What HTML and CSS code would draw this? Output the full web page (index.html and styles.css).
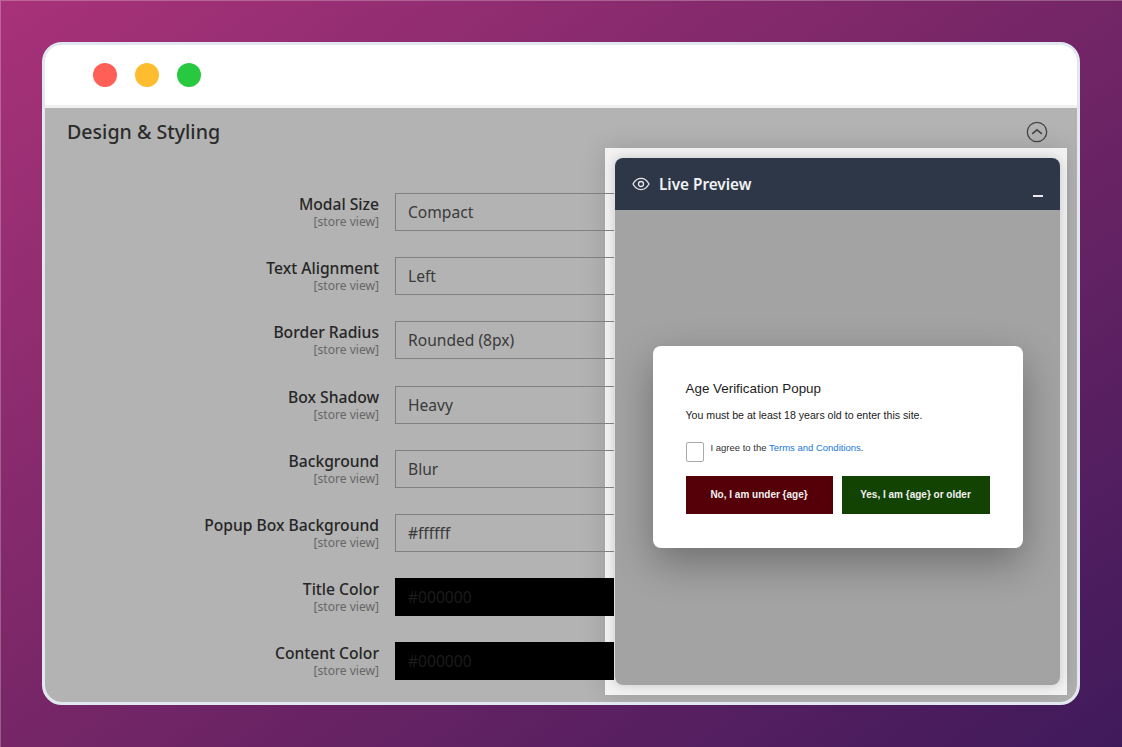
FILE: index.html
```html
<!DOCTYPE html>
<html lang="en">
<head>
<meta charset="utf-8">
<title>Design &amp; Styling</title>
<link rel="stylesheet" href="styles.css">
</head>
<body>
<div class="window">
  <header class="titlebar">
    <span class="dot red"></span>
    <span class="dot yellow"></span>
    <span class="dot green"></span>
  </header>
  <main class="content">
    <div class="section-head">
      <h2>Design &amp; Styling</h2>
      <svg class="collapse" viewBox="0 0 22 22" width="22" height="22" fill="none" stroke="#444" stroke-width="1.3"><circle cx="11" cy="11" r="9.7"/><path d="M6.200 12.800 11 8.800l4.800 4" stroke-width="1.600"/></svg>
    </div>
    <div class="form">
      <div class="row"><div class="label"><b>Modal Size</b><small>[store view]</small></div><div class="field">Compact</div></div>
      <div class="row"><div class="label"><b>Text Alignment</b><small>[store view]</small></div><div class="field">Left</div></div>
      <div class="row"><div class="label"><b>Border Radius</b><small>[store view]</small></div><div class="field">Rounded (8px)</div></div>
      <div class="row"><div class="label"><b>Box Shadow</b><small>[store view]</small></div><div class="field">Heavy</div></div>
      <div class="row"><div class="label"><b>Background</b><small>[store view]</small></div><div class="field">Blur</div></div>
      <div class="row"><div class="label"><b>Popup Box Background</b><small>[store view]</small></div><div class="field">#ffffff</div></div>
      <div class="row"><div class="label"><b>Title Color</b><small>[store view]</small></div><div class="field black">#000000</div></div>
      <div class="row"><div class="label"><b>Content Color</b><small>[store view]</small></div><div class="field black">#000000</div></div>
    </div>
    <aside class="preview-frame">
      <div class="preview">
        <div class="preview-head">
          <svg viewBox="0 0 18 14" width="18" height="14" fill="none" stroke="#e4e7eb" stroke-width="1.3"><path d="M1 7c2-3.6 4.8-5.6 8-5.6S15 3.400 17 7c-2 3.600-4.800 5.600-8 5.600S3 10.600 1 7Z"/><circle cx="9" cy="7" r="2.500"/></svg>
          <span class="preview-title">Live Preview</span>
          <span class="minimize"></span>
        </div>
        <div class="preview-body">
          <div class="popup">
            <h3>Age Verification Popup</h3>
            <p>You must be at least 18 years old to enter this site.</p>
            <div class="agree">
              <span class="checkbox"></span>
              <span class="agree-text">I agree to the <a>Terms and Conditions</a>.</span>
            </div>
            <div class="buttons">
              <span class="btn no">No, I am under {age}</span>
              <span class="btn yes">Yes, I am {age} or older</span>
            </div>
          </div>
        </div>
      </div>
    </aside>
  </main>
</div>
</body>
</html>
```
FILE: styles.css
```css
* { box-sizing: border-box; }
html, body { height: 100%; }
body {
  margin: 0;
  width: 1122px;
  height: 747px;
  overflow: hidden;
  padding: 42px;
  background: linear-gradient(145deg, #a83279 0%, #7a2768 45%, #3f1a5b 100%);
  box-shadow: inset 1px 1px 0 rgba(255, 255, 255, .25);
  font-family: "Noto Sans", "Open Sans", sans-serif;
}
.window {
  width: 1038px;
  height: 663px;
  border: 3px solid #e2e8f0;
  border-radius: 20px;
  overflow: hidden;
  display: flex;
  flex-direction: column;
  background: #fff;
}
.titlebar {
  height: 63px;
  flex: none;
  background: #fff;
  border-bottom: 3px solid #f0f0f0;
  display: flex;
  align-items: center;
  gap: 18px;
  padding: 0 0 1px 48px;
}
.dot { width: 24px; height: 24px; border-radius: 50%; }
.red { background: #ff5f57; }
.yellow { background: #febc2e; }
.green { background: #28c840; }
.content {
  position: relative;
  flex: 1;
  background: #b3b3b3;
  overflow: hidden;
}
.section-head {
  display: flex;
  justify-content: space-between;
  padding: 9px 29px 0 22px;
  height: 85px;
}
.section-head h2 {
  margin: 0;
  font-size: 19.600px;
  line-height: 30px;
  font-weight: 500;
  color: #2b2b2b;
}
.collapse { margin-top: 4px; }
.form {
  position: relative;
  z-index: 1;
  display: flex;
  flex-direction: column;
  gap: 26.2px;
}
.row { display: flex; gap: 16px; height: 38px; }
.label {
  width: 334px;
  text-align: right;
  display: flex;
  flex-direction: column;
}
.label b { font-size: 15.650px; line-height: 22px; font-weight: 500; color: #262626; }
.label small { font-size: 12.100px; line-height: 13.500px; color: #666; }
.field {
  width: 219px;
  height: 38px;
  border: 1px solid #808080;
  border-right: 0;
  padding: 0 12px;
  font-size: 15.600px;
  line-height: 36px;
  color: #3a3a3a;
}
.field.black { background: #000; color: #1c1c1c; border-color: #000; }
.preview-frame {
  position: absolute;
  left: 560px;
  top: 40px;
  width: 462px;
  height: 547px;
  padding: 10px 7px 10px 10px;
  background: #f2f2f2;
  box-shadow: 0 0 24px rgba(0, 0, 0, .14);
}
.preview {
  height: 100%;
  border-radius: 8px;
  overflow: hidden;
  display: flex;
  flex-direction: column;
  box-shadow: 0 0 12px rgba(0, 0, 0, .18);
}
.preview-head {
  height: 52px;
  flex: none;
  background: #2d3748;
  display: flex;
  align-items: center;
  gap: 9px;
  padding: 0 17px;
  position: relative;
}
.preview-title { font-size: 15.300px; font-weight: 600; color: #f1f3f5; }
.minimize {
  position: absolute;
  right: 17px;
  top: 37px;
  width: 10px;
  height: 2px;
  background: #e8eaed;
}
.preview-body {
  flex: 1;
  background: #a3a3a3;
  display: flex;
  align-items: flex-start;
  justify-content: center;
  padding-top: 136px;
}
.popup {
  width: 370px;
  height: 202px;
  background: #fff;
  border-radius: 8px;
  padding: 34px 33px 0;
  box-shadow: 0 15px 40px rgba(0, 0, 0, .32);
  font-family: "Liberation Sans", Arial, sans-serif;
}
.popup h3 { margin: 0; font-size: 13.400px; line-height: 18px; font-weight: 400; color: #1d1d1d; }
.popup p { margin: 10px 0 0; font-size: 10.600px; line-height: 14px; color: #222; }
.agree { display: flex; gap: 7px; margin-top: 14px; height: 33px; padding-top: 6px; box-sizing: content-box; }
.checkbox {
  width: 18px;
  height: 20px;
  background: #fff;
  border: 1px solid #aaa;
  border-radius: 2px;
}
.agree-text { font-size: 9.500px; line-height: 12px; color: #333; }
.agree-text a { color: #1979d8; }
.buttons { display: flex; gap: 9px; margin-top: 1px; }
.btn {
  height: 38px;
  font-size: 10px;
  font-weight: 700;
  line-height: 38px;
  text-align: center;
  color: #f2f2f2;
}
.no { width: 147px; background: #550008; }
.yes { width: 148px; background: #124302; }
```
